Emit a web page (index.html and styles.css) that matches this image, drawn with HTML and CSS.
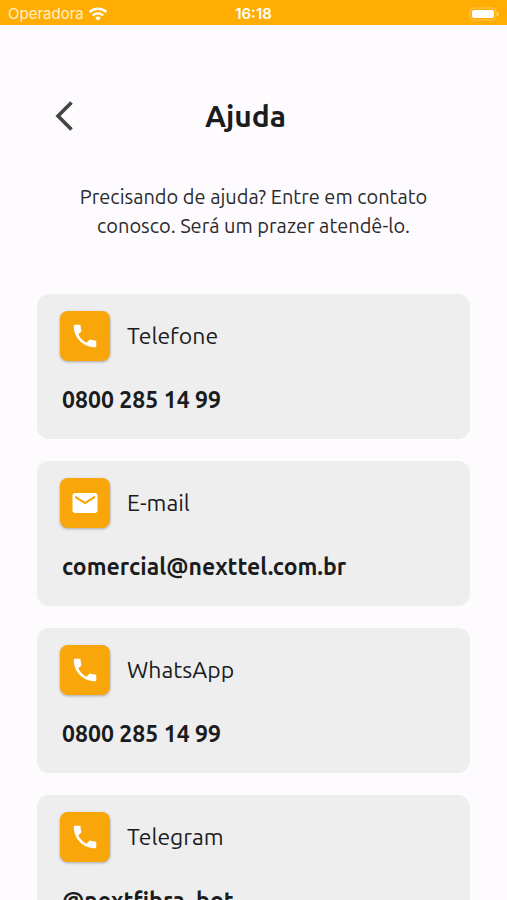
FILE: index.html
```html
<!DOCTYPE html>
<html lang="pt-BR">
<head>
	<meta charset="utf-8">
	<title>Ajuda</title>
	<meta name="viewport" content="width=device-width, initial-scale=1.0">
	<link rel="stylesheet" href="styles.css">
</head>
<body>
	<div class="status">
		<div class="carrier">
			<span>Operadora</span>
			<svg width="20" height="14" viewBox="0 0 20 14" fill="none" stroke="white" stroke-width="2.4">
				<path d="M1.6 5.2a12 12 0 0 1 16.8 0"/>
				<path d="M4.7 8.5a7.6 7.6 0 0 1 10.6 0"/>
				<path d="M7.2 10.9a4 4 0 0 1 5.6 0L10 13.7z" fill="white" stroke="none"/>
			</svg>
		</div>
		<span class="clock">16:18</span>
		<div class="battery">
			<svg width="30" height="14" viewBox="0 0 30 14">
				<rect x="1" y="1" width="26" height="12" rx="3.5" fill="none" stroke="white" stroke-opacity=".35"/>
				<rect x="3" y="3" width="22" height="8" rx="2" fill="white"/>
				<path d="M28 5v4a2 2 0 0 0 0-4z" fill="white" fill-opacity=".4"/>
			</svg>
		</div>
	</div>

	<header class="topbar">
		<button class="back" type="button" aria-label="Voltar">
			<svg width="20" height="32" viewBox="0 0 20 32" fill="none" stroke="#444" stroke-width="3.6">
				<path d="M17.5 2.5L4 16l13.5 13.5"/>
			</svg>
		</button>
		<h1>Ajuda</h1>
	</header>

	<p class="intro">Precisando de ajuda? Entre em contato conosco. Será um prazer atendê-lo.</p>

	<main class="contacts">
		<section class="card">
			<div class="card-head">
				<button class="icon" type="button" aria-label="Telefone">
					<svg width="30" height="30" viewBox="0 0 24 24" fill="white">
						<path d="M6.62 10.79c1.44 2.83 3.76 5.14 6.59 6.59l2.2-2.2c.27-.27.67-.36 1.02-.24 1.12.37 2.33.57 3.57.57.55 0 1 .45 1 1V20c0 .55-.45 1-1 1-9.39 0-17-7.61-17-17 0-.55.45-1 1-1h3.5c.55 0 1 .45 1 1 0 1.25.2 2.45.57 3.57.11.35.03.74-.25 1.02l-2.2 2.2z"/>
					</svg>
				</button>
				<h2>Telefone</h2>
			</div>
			<p class="value">0800 285 14 99</p>
		</section>

		<section class="card">
			<div class="card-head">
				<button class="icon" type="button" aria-label="E-mail">
					<svg width="30" height="30" viewBox="0 0 24 24" fill="white">
						<path d="M20 4H4c-1.1 0-1.99.9-1.99 2L2 18c0 1.1.9 2 2 2h16c1.1 0 2-.9 2-2V6c0-1.1-.9-2-2-2zm0 4l-8 5-8-5V6l8 5 8-5v2z"/>
					</svg>
				</button>
				<h2>E-mail</h2>
			</div>
			<p class="value">comercial@nexttel.com.br</p>
		</section>

		<section class="card">
			<div class="card-head">
				<button class="icon" type="button" aria-label="WhatsApp">
					<svg width="30" height="30" viewBox="0 0 24 24" fill="white">
						<path d="M6.62 10.79c1.44 2.83 3.76 5.14 6.59 6.59l2.2-2.2c.27-.27.67-.36 1.02-.24 1.12.37 2.33.57 3.57.57.55 0 1 .45 1 1V20c0 .55-.45 1-1 1-9.39 0-17-7.61-17-17 0-.55.45-1 1-1h3.5c.55 0 1 .45 1 1 0 1.25.2 2.45.57 3.57.11.35.03.74-.25 1.02l-2.2 2.2z"/>
					</svg>
				</button>
				<h2>WhatsApp</h2>
			</div>
			<p class="value">0800 285 14 99</p>
		</section>

		<section class="card">
			<div class="card-head">
				<button class="icon" type="button" aria-label="Telegram">
					<svg width="30" height="30" viewBox="0 0 24 24" fill="white">
						<path d="M6.62 10.79c1.44 2.83 3.76 5.14 6.59 6.59l2.2-2.2c.27-.27.67-.36 1.02-.24 1.12.37 2.33.57 3.57.57.55 0 1 .45 1 1V20c0 .55-.45 1-1 1-9.39 0-17-7.61-17-17 0-.55.45-1 1-1h3.5c.55 0 1 .45 1 1 0 1.25.2 2.45.57 3.57.11.35.03.74-.25 1.02l-2.2 2.2z"/>
					</svg>
				</button>
				<h2>Telegram</h2>
			</div>
			<p class="value">@nextfibra_bot</p>
		</section>
	</main>
</body>
</html>
```

FILE: styles.css
```css
*{
	box-sizing: border-box;
}
body{
	display: flex;
	flex-direction: column;
	height: 100vh;
	margin: 0;
	overflow: hidden;
	background: #fefbff;
	color: #1b1c1e;
	font-family: Ubuntu, "Noto Sans", sans-serif;
}
h1, h2, p{
	margin: 0;
}
button{
	display: flex;
	align-items: center;
	justify-content: center;
	padding: 0;
	border: 0;
	background: none;
	cursor: pointer;
}

/* status bar */
.status{
	display: grid;
	grid-template-columns: 1fr auto 1fr;
	align-items: center;
	flex-shrink: 0;
	height: 25px;
	padding: 2px 8px 0;
	background: #ffad02;
	color: white;
	font-family: Inter, sans-serif;
	font-size: 15px;
}
.carrier{
	display: flex;
	align-items: center;
	gap: 4px;
	color: #fff0c8;
}
.clock{
	font-weight: 600;
}
.battery{
	display: flex;
	justify-content: flex-end;
}

/* title row */
.topbar{
	display: grid;
	grid-template-columns: 64px 1fr 64px;
	align-items: center;
	flex-shrink: 0;
	height: 64px;
	margin-top: 59px;
	padding: 0 48px 0 32px;
}
.back{
	height: 64px;
}
.topbar h1{
	text-align: center;
	font-size: 30px;
	font-weight: 700;
	line-height: 36px;
}

.intro{
	flex-shrink: 0;
	margin: 34px 64px 54px;
	text-align: center;
	font-size: 20px;
	line-height: 29px;
	color: #2b2b2d;
}

/* contact list */
.contacts{
	display: flex;
	flex-direction: column;
	flex: 1;
	gap: 22px;
	min-height: 0;
	padding: 0 37px;
	overflow-y: auto;
	scrollbar-width: none;
}
.card{
	flex-shrink: 0;
	padding: 17px 23px 24px;
	background: #eee;
	border-radius: 12px;
}
.card-head{
	display: flex;
	align-items: center;
	gap: 17px;
}
.icon{
	width: 50px;
	height: 50px;
	background: #f9a60a;
	border-radius: 8px;
	box-shadow: 0 1px 3px rgba(0, 0, 0, .3);
}
.card h2{
	font-size: 23px;
	font-weight: 400;
	line-height: 30px;
}
.value{
	margin-top: 24px;
	padding-left: 2px;
	font-size: 23px;
	font-weight: 700;
	line-height: 30px;
}
```
